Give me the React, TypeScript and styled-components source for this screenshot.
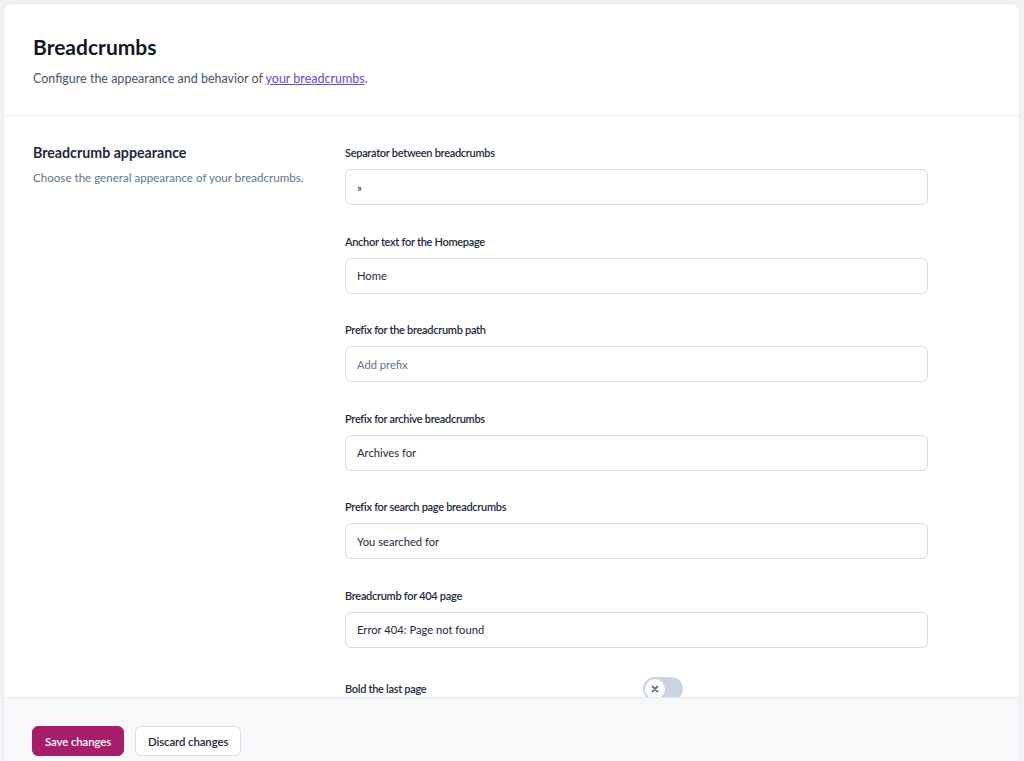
import styled, { createGlobalStyle } from 'styled-components';

const GlobalStyle = createGlobalStyle`
    html, body {
        margin: 0;
        padding: 0;
        background: #f0f2f5;
        font-family: Lato, 'Noto Sans', sans-serif;
        color: #1e293b;
    }
    * {
        box-sizing: border-box;
    }
`;

const fields = [
    { label: 'Separator between breadcrumbs', value: '»' },
    { label: 'Anchor text for the Homepage', value: 'Home' },
    { label: 'Prefix for the breadcrumb path', value: '', placeholder: 'Add prefix' },
    { label: 'Prefix for archive breadcrumbs', value: 'Archives for' },
    { label: 'Prefix for search page breadcrumbs', value: 'You searched for' },
    { label: 'Breadcrumb for 404 page', value: 'Error 404: Page not found' },
];

export default function App() {
    return (
        <>
            <GlobalStyle />
            <Page>
                <Card>
                    <Header>
                        <Title>Breadcrumbs</Title>
                        <Intro>
                            Configure the appearance and behavior of <Link href='#'>your breadcrumbs</Link>.
                        </Intro>
                    </Header>
                    <Main>
                        <Section>
                            <SectionInfo>
                                <SectionTitle>Breadcrumb appearance</SectionTitle>
                                <SectionText>Choose the general appearance of your breadcrumbs.</SectionText>
                            </SectionInfo>
                            <Fields>
                                {fields.map((field) => (
                                    <Field key={field.label}>
                                        <Label>{field.label}</Label>
                                        <Input defaultValue={field.value} placeholder={field.placeholder} />
                                    </Field>
                                ))}
                                <ToggleRow>
                                    <Label>Bold the last page</Label>
                                    <Toggle>
                                        <Knob>
                                            <svg width='8' height='8' viewBox='0 0 8 8'>
                                                <path d='M1.5 1.5 L6.5 6.5 M6.5 1.5 L1.5 6.5' stroke='#64748b' strokeWidth='1.8' strokeLinecap='round' />
                                            </svg>
                                        </Knob>
                                    </Toggle>
                                </ToggleRow>
                            </Fields>
                        </Section>
                    </Main>
                    <Footer>
                        <Button $primary>Save changes</Button>
                        <Button>Discard changes</Button>
                    </Footer>
                </Card>
            </Page>
        </>
    );
}

const Page = styled.div`
    height: 761px;
    padding: 4px 5px 0 4px;
    overflow: hidden;
`;

const Card = styled.div`
    height: 100%;
    background: #ffffff;
    border-radius: 8px 8px 0 0;
    box-shadow: 0 0 0 1px rgba(226, 232, 240, 0.6);
    display: flex;
    flex-direction: column;
    overflow: hidden;
`;

const Header = styled.div`
    padding: 29px 29px 26px;
    border-bottom: 1px solid #e9edf2;
`;

const Title = styled.h1`
    margin: 0 0 8px;
    font-size: 21px;
    line-height: 28px;
    font-weight: 700;
    color: #111827;
`;

const Intro = styled.p`
    margin: 0;
    font-size: 12.5px;
    line-height: 20px;
    color: #475569;
`;

const Link = styled.a`
    color: #5f4bd8;
    text-decoration: underline;
`;

const Main = styled.div`
    flex: 1;
    min-height: 0;
    overflow: hidden;
`;

const Section = styled.div`
    display: grid;
    grid-template-columns: 280px 583px;
    column-gap: 32px;
    padding: 27px 29px 0;
`;

const SectionInfo = styled.div`
    display: flex;
    flex-direction: column;
    gap: 6px;
`;

const SectionTitle = styled.h2`
    margin: 0;
    font-size: 14.2px;
    line-height: 20px;
    font-weight: 700;
    color: #1e293b;
`;

const SectionText = styled.p`
    margin: 0;
    font-size: 11.6px;
    line-height: 18px;
    color: #64748b;
`;

const Fields = styled.div`
    display: flex;
    flex-direction: column;
    gap: 28.6px;
    padding-top: 2px;
`;

const Field = styled.div`
    display: flex;
    flex-direction: column;
    gap: 8px;
`;

const Label = styled.label`
    font-size: 11px;
    line-height: 16px;
    font-weight: 600;
    letter-spacing: -0.3px;
    color: #1e293b;
`;

const Input = styled.input`
    height: 36px;
    width: 100%;
    padding: 0 11px;
    border: 1px solid #d6dde6;
    border-radius: 6px;
    font-family: inherit;
    font-size: 11.2px;
    color: #1e293b;
    background: #ffffff;
    outline: none;

    &::placeholder {
        color: #64748b;
    }
`;

const ToggleRow = styled.div`
    display: grid;
    grid-template-columns: 298px auto;
    align-items: center;
    height: 24px;
`;

const Toggle = styled.div`
    width: 40px;
    height: 24px;
    border-radius: 12px;
    background: #cbd5e1;
    padding: 2px;
    display: flex;
    align-items: center;
`;

const Knob = styled.div`
    width: 20px;
    height: 20px;
    border-radius: 50%;
    background: #ffffff;
    display: flex;
    align-items: center;
    justify-content: center;
`;

const Footer = styled.div`
    height: 64px;
    flex-shrink: 0;
    border-top: 1px solid #e5e9ef;
    background: #f7f8fa;
    padding: 28px 28px 0;
    display: flex;
    align-items: flex-start;
    gap: 11px;
`;

const Button = styled.button<{ $primary?: boolean }>`
    height: 30px;
    padding: 0 12px;
    border-radius: 6px;
    font-family: inherit;
    font-size: 11.4px;
    font-weight: 600;
    letter-spacing: -0.1px;
    cursor: pointer;
    border: 1px solid ${({ $primary }) => ($primary ? '#a61e69' : '#d6dde6')};
    background: ${({ $primary }) => ($primary ? '#a61e69' : '#ffffff')};
    color: ${({ $primary }) => ($primary ? '#ffffff' : '#1e293b')};
`;
